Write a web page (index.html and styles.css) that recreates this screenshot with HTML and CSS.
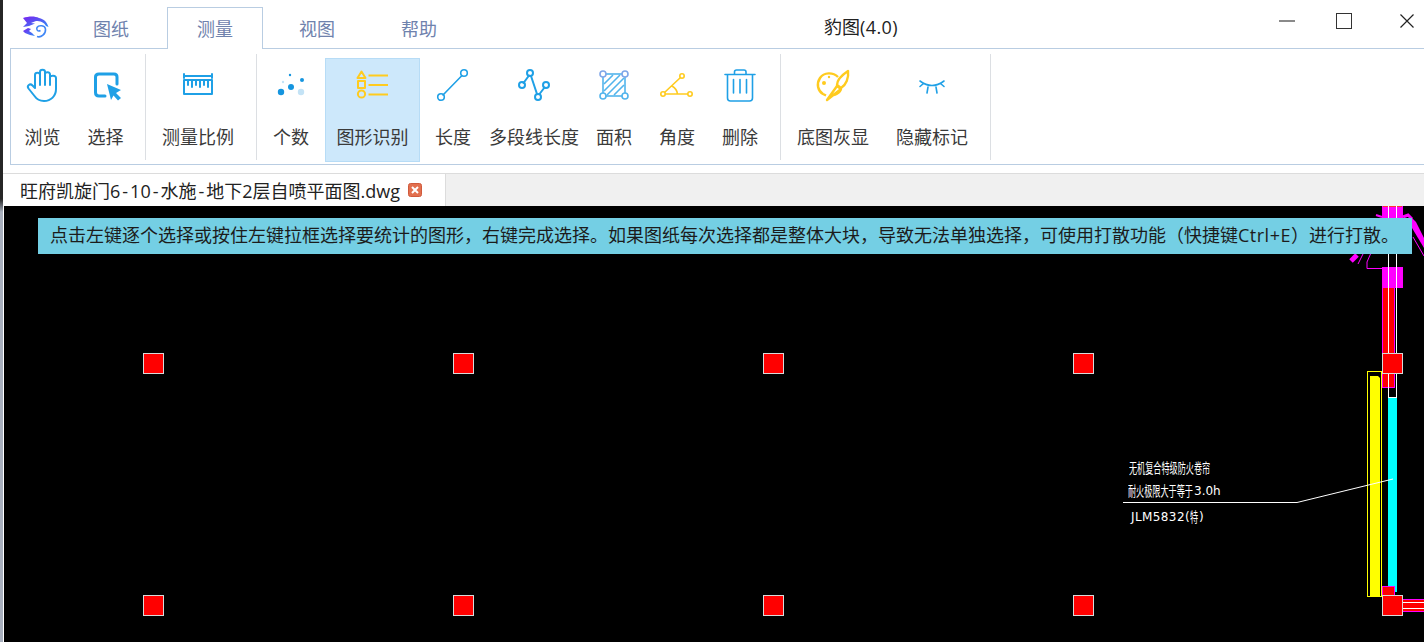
FILE: index.html
```html
<!DOCTYPE html>
<html lang="zh-CN">
<head>
<meta charset="utf-8">
<title>豹图(4.0)</title>
<link rel="stylesheet" href="styles.css">
</head>
<body>
<div class="app">
  <div class="edge"></div>
  <main class="main">
    <header class="titlebar">
      <svg class="logo" viewBox="0 0 28 24" aria-hidden="true">
        <defs>
          <linearGradient id="lg" x1="0" y1="0" x2="1" y2="1">
            <stop offset="0" stop-color="#7a22f0"/>
            <stop offset="1" stop-color="#2f8ff5"/>
          </linearGradient>
        </defs>
        <path class="logo-fill" d="M2 3 C8 1 14 1 18 3 C23 4 26 7 27.500 12 L25 11 C23 7 19 6 15 6 L10 8 L14 8.500 L8 11 L2 12 L6 8 Z"/>
        <path class="logo-fill" d="M2 16 L7 13 L10 14 L8 16 L11 18 L14 21 L9 20 L4 18 Z"/>
        <path class="logo-line" d="M16 21.500 C20 23 25 19 24.500 14 C24 10.500 18 9.500 16 12.500 C15 15 17 17 19.500 15.500"/>
      </svg>
      <nav class="tabs">
        <div class="tab">图纸</div>
        <div class="tab tab-active">测量</div>
        <div class="tab">视图</div>
        <div class="tab">帮助</div>
      </nav>
      <div class="title">豹图<span class="title-ver">(4.0)</span></div>
      <div class="winctl">
        <svg class="win-min" viewBox="0 0 16 2"><rect width="16" height="2" fill="#8a8a8a"/></svg>
        <svg class="win-max" viewBox="0 0 16 16"><rect x=".5" y=".5" width="15" height="15" fill="none" stroke="#333"/></svg>
        <svg class="win-close" viewBox="0 0 14 14"><path d="M.5 .5 L13.500 13.500 M13.500 .5 L.5 13.500" stroke="#222" stroke-width="1.2" fill="none"/></svg>
      </div>
    </header>

    <section class="ribbon">
      <div class="group group-a">
        <div class="item">
          <svg class="icon" viewBox="0 0 40 40"><g class="s-blue"><path d="M11.500 30 L5.500 22.500 C3.500 19.500 7 17 9.500 19.500 L12 22 V9 C12 6 17 6 17 9 V6 C17 3 22 3 22 6 V8 C22 5.500 27 5.500 27 8.500 V11.500 C27 9 33 9 33 12 V23 C33 30 28 35 21 35 C17 35 13.500 33 11.500 30 Z"/><path d="M17 9 V19 M22 8 V19 M27 11 V19"/></g></svg>
          <span class="label">浏览</span>
        </div>
        <div class="item">
          <svg class="icon" viewBox="0 0 40 40"><g class="s-blue s-thick"><path d="M19 30 H13 Q9.500 30 9.500 26.500 V11 Q9.500 8 13 8 H28 Q31 8 31 11 V18"/></g><path class="f-blue" d="M21 18 L35 24 L30 27 L35 32 L32 34.500 L27.500 29.500 L25 34 Z"/></svg>
          <span class="label">选择</span>
        </div>
      </div>
      <div class="group group-b">
        <div class="item">
          <svg class="icon" viewBox="0 0 40 40"><g class="s-blue"><path d="M6 8 V12 M34 8 V12 M6 10 H34"/><path d="M6 14 H34 V28 H6 Z"/><path d="M10 15 V19 M14 15 V21 M18 15 V19 M22 15 V21 M26 15 V19 M30 15 V21"/></g></svg>
          <span class="label">测量比例</span>
        </div>
      </div>
      <div class="group group-c">
        <div class="item">
          <svg class="icon" viewBox="0 0 40 40"><circle class="f-dot" cx="10" cy="26" r="3.200"/><circle class="f-dot" cx="20" cy="21" r="3"/><circle class="f-light" cx="30" cy="26" r="3.200"/><circle class="f-dot" cx="31" cy="14" r="2"/><circle class="f-dot" cx="19" cy="9" r="1.200"/><circle class="f-light" cx="12" cy="16" r="1.200"/></svg>
          <span class="label">个数</span>
        </div>
        <div class="item item-on">
          <svg class="icon" viewBox="0 0 40 40"><g class="s-yellow"><path d="M8.500 5.500 L12.500 12 H4.500 Z"/><rect x="5" y="15" width="7" height="7"/><circle cx="8.500" cy="28" r="3.600"/><path d="M15.500 9.500 H35 M15.500 19 H35 M15.500 28.500 H35"/></g></svg>
          <span class="label">图形识别</span>
        </div>
        <div class="item">
          <svg class="icon" viewBox="0 0 40 40"><g class="s-blue s-thin"><path d="M10 29 L29 9.500"/><circle cx="8" cy="31" r="3.300"/><circle cx="31" cy="7" r="3.300"/></g></svg>
          <span class="label">长度</span>
        </div>
        <div class="item">
          <svg class="icon" viewBox="0 0 40 40"><g class="s-blue"><path d="M9.500 17 L15 9.500 M17 10 L23 28 M25.500 28 L30.500 21.500"/><circle cx="8" cy="19" r="3"/><circle cx="16" cy="7" r="3"/><circle cx="24" cy="31" r="3"/><circle cx="32" cy="19" r="3"/></g></svg>
          <span class="label">多段线长度</span>
        </div>
        <div class="item">
          <svg class="icon" viewBox="0 0 40 40"><g class="s-area"><rect x="9" y="8" width="22" height="22"/><path d="M10 18 L19 9 M10 25 L26 9 M13 29 L30 12 M20 29 L30 19"/><circle class="f-white s-violet" cx="9" cy="8" r="3"/><circle class="f-white s-violet" cx="31" cy="8" r="3"/><circle class="f-white" cx="9" cy="30" r="3"/><circle class="f-white" cx="31" cy="30" r="3"/></g></svg>
          <span class="label">面积</span>
        </div>
        <div class="item">
          <svg class="icon" viewBox="0 0 40 40"><g class="s-yellow s-thin"><path d="M8 28 H31 M7.500 26.500 L23.500 11.500 M15 20 Q20 23 20.500 28"/><circle class="f-white" cx="6" cy="28" r="2.200"/><circle class="f-white" cx="33" cy="28" r="2.200"/><circle class="f-white" cx="25" cy="10" r="2.200"/></g></svg>
          <span class="label">角度</span>
        </div>
        <div class="item">
          <svg class="icon" viewBox="0 0 40 40"><g class="s-blue s-thin"><path d="M5 8.500 H35 M14.500 8 V6 Q14.500 4 16.500 4 H24 Q26 4 26 6 V8"/><path d="M7.500 9 V32 Q7.500 35 10.500 35 H29.500 Q32.500 35 32.500 32 V9"/><path d="M13.500 13.500 V27 M20 13.500 V27 M26.500 13.500 V27"/></g></svg>
          <span class="label">删除</span>
        </div>
      </div>
      <div class="group group-d">
        <div class="item">
          <svg class="icon" viewBox="0 0 40 40"><g class="s-yellow s-mid"><path d="M25 11 C20 6 11 6 7 12 C3 18 5 25 10 28 L13 29.500"/><path d="M21 29 C24 28 27 26 28 23"/><path d="M14 34 L24 20 L28 23 Z"/><path d="M24 19 C24 13 29 9 35 5 C36 12 33 19 28 22 Z"/></g><circle class="f-yellow" cx="11" cy="17" r="2"/><circle class="f-yellow" cx="16" cy="11" r="1.200"/></svg>
          <span class="label">底图灰显</span>
        </div>
        <div class="item">
          <svg class="icon" viewBox="0 0 40 40"><g class="s-blue s-thin"><path d="M8 15 Q20 24 32 15"/><path d="M8 20.500 L11.500 17.500 M15 27 L16 21 M25 27 L24 21 M32 20.500 L28.500 17.500"/></g></svg>
          <span class="label">隐藏标记</span>
        </div>
      </div>
    </section>

    <div class="docbar">
      <div class="doctab">
        <span>旺府凯旋门6<span class="dash">-</span>10<span class="dash">-</span>水施<span class="dash">-</span>地下2层自喷平面图.dwg</span>
        <svg class="docclose" viewBox="0 0 14 14"><rect x=".5" y=".5" width="13" height="13" rx="2" fill="#e2704f" stroke="#d05a3c"/><path d="M4 4 L10 10 M10 4 L4 10" stroke="#fff" stroke-width="2"/></svg>
      </div>
    </div>

    <section class="canvas">
      <svg class="drawing" viewBox="4 206 1420 436" aria-hidden="true">
        <rect x="1382" y="206" width="21" height="12" fill="#f0f"/>
        <rect x="1383" y="206" width="19" height="1" fill="#f33"/>
        <rect x="1382" y="267" width="21" height="21" fill="#f0f"/>
        <rect x="1382" y="288" width="13" height="100" fill="#f00"/>
        <rect x="1382" y="288" width="1" height="100" fill="#f0f"/>
        <rect x="1394" y="288" width="1" height="100" fill="#f0f"/>
        <rect x="1382" y="387" width="13" height="1" fill="#f0f"/>
        <path d="M1388.500 206 V398 M1396.500 206 V398 M1388 397.500 H1397" stroke="#fff" fill="none"/>
        <polygon points="1412,218 1416,222 1424,238 1424,248 1418,238 1412,228" fill="#f0f"/>
        <path d="M1413 237 L1424 256" stroke="#f0f" fill="none"/>
        <path d="M1403 217 L1408 215 L1412 219" stroke="#f0f" stroke-width="3" fill="none"/>
        <path d="M1376 215 L1382 217" stroke="#f0f" stroke-width="2" fill="none"/>
        <path d="M1351 261 L1357 255" stroke="#f0f" stroke-width="5" fill="none"/>
        <path d="M1358 264 L1363 254" stroke="#f0f" fill="none"/>
        <path d="M1370.500 254 L1367 262 V268.500 H1382" stroke="#f0f" fill="none"/>
        <rect x="1367.500" y="371.500" width="14" height="225" fill="none" stroke="#ff0"/>
        <path d="M1370 376 H1378 L1380 378 V597 H1370 Z" fill="#ff0"/>
        <rect x="1388" y="398" width="9" height="194" fill="#0ff"/>
        <rect x="1382.500" y="586.500" width="12" height="10" fill="#f00" stroke="#f0f"/>
        <rect x="1403" y="599" width="21" height="13" fill="#f00"/>
        <path d="M1403 599.500 H1424 M1403 611.500 H1424" stroke="#f0f" fill="none"/>
        <path d="M1403 602.500 H1424 M1403 608.500 H1424" stroke="#fff" fill="none"/>
        <path d="M1123 502.500 H1297 L1393 479" stroke="#fff" fill="none"/>
        <g class="heads">
          <rect x="143.500" y="353.500" width="20" height="20"/>
          <rect x="453.500" y="353.500" width="20" height="20"/>
          <rect x="763.500" y="353.500" width="20" height="20"/>
          <rect x="1073.500" y="353.500" width="20" height="20"/>
          <rect x="1382.500" y="353.500" width="20" height="20"/>
          <rect x="143.500" y="595.500" width="20" height="20"/>
          <rect x="453.500" y="595.500" width="20" height="20"/>
          <rect x="763.500" y="595.500" width="20" height="20"/>
          <rect x="1073.500" y="595.500" width="20" height="20"/>
          <rect x="1382.500" y="595.500" width="20" height="20"/>
        </g>
      </svg>
      <div class="cad cad-1"><span class="han han-10">无机复合特级防火卷帘</span></div>
      <div class="cad cad-2"><span class="han han-8">耐火极限大于等于</span><span class="lat">3.0h</span></div>
      <div class="cad cad-3"><span class="lat lat-wide">JLM5832(</span><span class="han han-1">特</span><span class="lat">)</span></div>
      <div class="banner">点击左键逐个选择或按住左键拉框选择要统计的图形，右键完成选择。如果图纸每次选择都是整体大块，导致无法单独选择，可使用打散功能（快捷键<span class="banner-key">Ctrl+E</span>）进行打散。</div>
    </section>
  </main>
</div>
</body>
</html>
```

FILE: styles.css
```css
* { box-sizing: border-box; }
html, body { margin: 0; padding: 0; height: 100%; overflow: hidden; background: #fff; }
body {
  font-family: "Open Sans", "Noto Sans CJK SC", "Liberation Sans", sans-serif;
  color: #333;
}
.app { display: flex; width: 1424px; height: 642px; }
.edge {
  width: 3px;
  flex: none;
  background: linear-gradient(#262626 0, #262626 31%, #a8afbd 33%, #a8afbd 100%);
}
.main { flex: 1; min-width: 0; display: flex; flex-direction: column; }

/* title bar */
.titlebar { height: 48px; flex: none; display: flex; align-items: flex-start; position: relative; }
.logo { width: 28px; height: 24px; margin: 15px 0 0 18px; flex: none; }
.logo-fill { fill: url(#lg); }
.logo-line { fill: none; stroke: #3f86f6; stroke-width: 1.6; }
.tabs { display: flex; gap: 6px; margin-left: 14px; position: relative; z-index: 2; }
.tab {
  width: 96px;
  height: 42px;
  margin-top: 7px;
  line-height: 44px;
  text-align: center;
  font-size: 18px;
  color: #6f82ad;
}
.tab-active {
  margin-left: 2px;
  background: #fff;
  border: 1px solid #b9cde2;
  border-bottom: 0;
  line-height: 42px;
}
.title { margin: 14px 0 0 357px; font-size: 18px; line-height: 26px; color: #222; white-space: nowrap; }
.title-ver { letter-spacing: .4px; }
.winctl { margin-left: auto; display: flex; align-items: flex-start; }
.win-min { width: 16px; height: 2px; margin: 20px 41px 0 0; }
.win-max { width: 16px; height: 16px; margin: 13px 48px 0 0; }
.win-close { width: 14px; height: 14px; margin: 14px 10px 0 0; }

/* ribbon */
.ribbon {
  height: 117px;
  flex: none;
  margin-left: 7px;
  padding-top: 5px;
  display: flex;
  align-items: flex-start;
  border: 1px solid #b9cde2;
  border-right: 0;
}
.group { display: grid; height: 106px; border-right: 1px solid #dcdfe3; }
.group-a { width: 135px; grid-template-columns: 63px 63px; }
.group-b { width: 111px; grid-template-columns: 104px; }
.group-c { width: 524px; grid-template-columns: 68px 95px 66px 96px 64px 62px 64px; }
.group-d { width: 210px; grid-template-columns: 104px 94px; }
.item {
  height: 104px;
  margin-top: 4px;
  padding-top: 8px;
  display: flex;
  flex-direction: column;
  align-items: center;
}
.item-on { background: #cde8fb; box-shadow: inset 0 0 0 1px #b7dcf6; }
.icon { width: 40px; height: 40px; flex: none; }
.label { margin-top: 19px; font-size: 18px; line-height: 24px; color: #3a3a3a; white-space: nowrap; }

/* icon paints */
.s-blue { fill: none; stroke: #1fa0e6; stroke-width: 2; stroke-linecap: round; stroke-linejoin: round; }
.s-thick { stroke-width: 3; }
.s-thin { stroke-width: 1.6; }
.s-yellow { fill: none; stroke: #ffcb1f; stroke-width: 2; stroke-linejoin: round; }
.s-yellow.s-thin { stroke-width: 1.6; }
.s-yellow.s-mid { stroke-width: 2.4; }
.s-area { fill: none; stroke: #52b4ec; stroke-width: 1.6; }
.s-violet { stroke: #7fa6e8; }
.f-white { fill: #fff; }
.f-blue { fill: #1fa0e6; }
.f-dot { fill: #1595df; }
.f-light { fill: #c4e3f6; }
.f-yellow { fill: #ffcb1f; }

/* document tab bar */
.docbar { height: 33px; flex: none; margin-top: 8px; background: #f0f0f0; border-top: 1px solid #dcdcdc; display: flex; }
.doctab {
  width: 443px;
  height: 33px;
  margin-top: -1px;
  padding-left: 17px;
  display: flex;
  align-items: center;
  background: #fff;
  border-top: 1px solid #dcdcdc;
  border-right: 1px solid #dcdcdc;
  font-size: 18px;
  color: #222;
  white-space: nowrap;
}
.dash { padding: 0 2px; }
.docclose { width: 14px; height: 14px; margin-left: 8px; flex: none; }

/* canvas */
.canvas { flex: 1; min-height: 0; margin-left: 1px; background: #000; position: relative; overflow: hidden; }
.drawing { position: absolute; left: 0; top: 0; width: 1420px; height: 436px; display: block; }
.heads rect { fill: #f00; stroke: #d8d8d8; stroke-width: 1; }
.banner {
  position: absolute;
  left: 34px;
  top: 12px;
  width: 1374px;
  height: 36px;
  padding-left: 12px;
  background: #74cfe4;
  font-size: 18px;
  line-height: 35px;
  color: #1c1c1c;
  white-space: nowrap;
  overflow: hidden;
}
.banner-key { letter-spacing: .5px; }
.cad {
  position: absolute;
  display: flex;
  align-items: center;
  color: #fff;
  height: 16px;
  white-space: nowrap;
}
.cad-1 { left: 1125px; top: 254px; }
.cad-2 { left: 1124px; top: 277px; }
.cad-3 { left: 1127px; top: 303px; }
.han {
  display: block;
  flex: none;
  font-size: 14px;
  line-height: 16px;
  transform: scaleX(.58);
  transform-origin: left center;
}
.han-10 { width: 82px; }
.han-8 { width: 66px; }
.han-1 { width: 9px; }
.lat { font-family: "DejaVu Sans", sans-serif; font-size: 12px; line-height: 16px; }
.lat-wide { letter-spacing: .4px; }
```
